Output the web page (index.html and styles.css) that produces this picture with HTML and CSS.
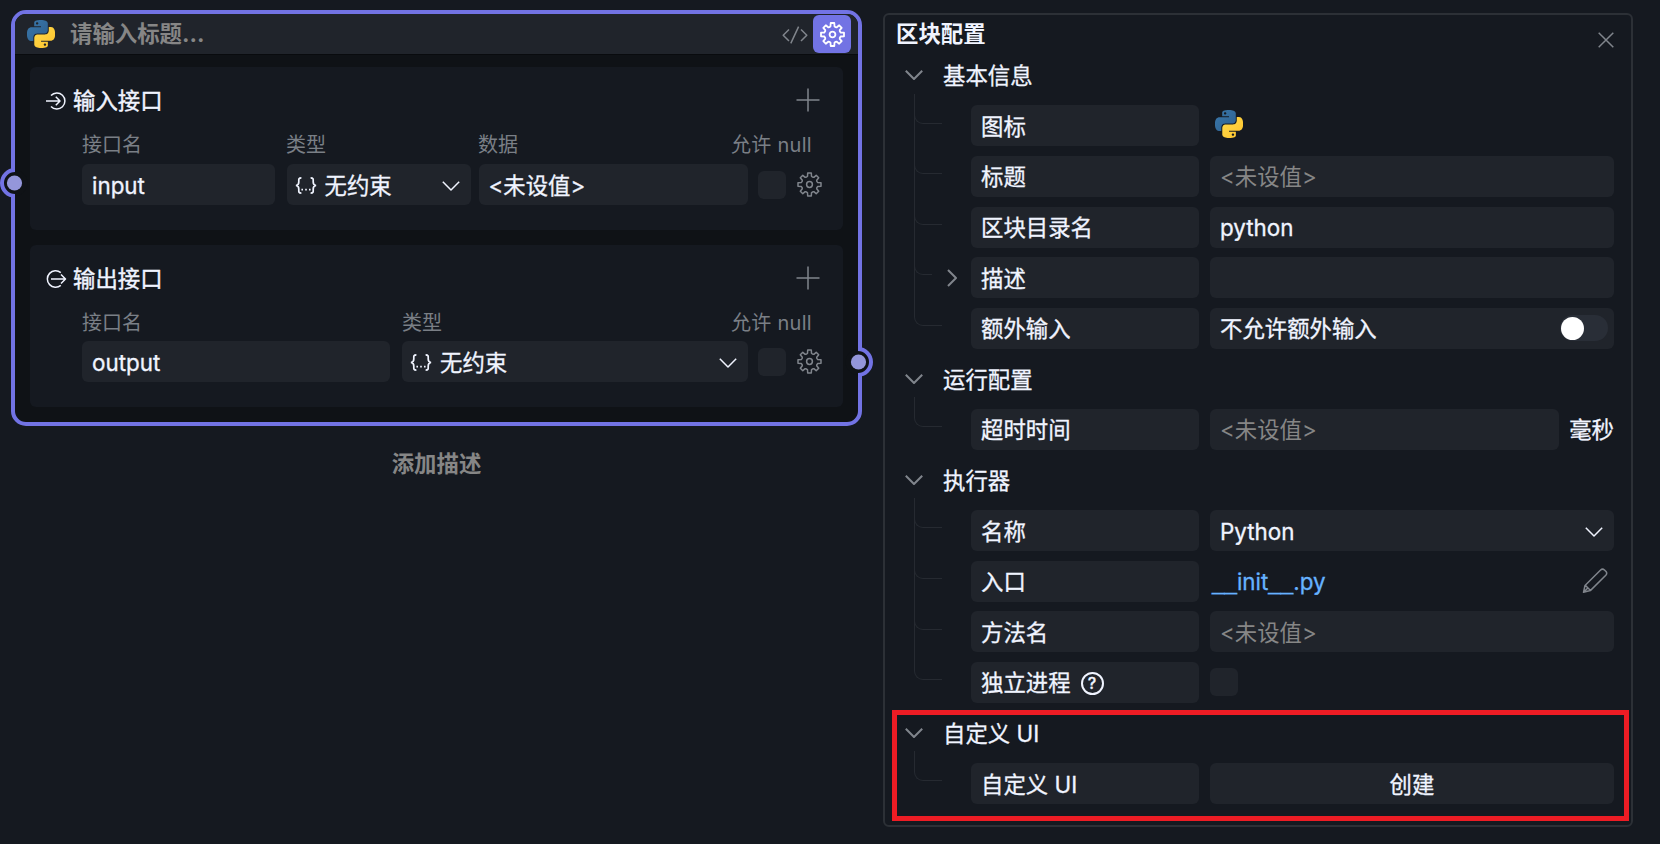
FILE: index.html
```html
<!DOCTYPE html>
<html lang="zh-CN">
<head>
<meta charset="utf-8">
<title>区块配置</title>
<link rel="stylesheet" href="styles.css">
</head>
<body>
<svg class="sprite" aria-hidden="true">
  <defs>
    <linearGradient id="py-blue" x1="0" y1="0" x2="1" y2="1"><stop offset="0" stop-color="#3a78ab"/><stop offset="1" stop-color="#2d5f8e"/></linearGradient>
    <linearGradient id="py-yellow" x1="0" y1="0" x2="1" y2="1"><stop offset="0" stop-color="#ffdb4b"/><stop offset="1" stop-color="#fdc22c"/></linearGradient>
  </defs>
  <symbol id="python" viewBox="0 0 24 24">
    <path fill="url(#py-blue)" d="M14.25.18l.9.2.73.26.59.3.45.32.34.34.25.34.16.33.1.3.04.26.02.2-.01.13V8.5l-.05.63-.13.55-.21.46-.26.38-.3.31-.33.25-.35.19-.35.14-.33.1-.3.07-.26.04-.21.02H8.77l-.69.05-.59.14-.5.22-.41.27-.33.32-.27.35-.2.36-.15.37-.1.35-.07.32-.04.27-.02.21v3.06H3.17l-.21-.03-.28-.07-.32-.12-.35-.18-.36-.26-.36-.36-.35-.46-.32-.59-.28-.73-.21-.88-.14-1.05-.05-1.23.06-1.22.16-1.04.24-.87.32-.71.36-.57.4-.44.42-.33.42-.24.4-.16.36-.1.32-.05.24-.01h.16l.06.01h8.16v-.83H6.18l-.01-2.75-.02-.37.05-.34.11-.31.17-.28.25-.26.31-.23.38-.2.44-.18.51-.15.58-.12.64-.1.71-.06.77-.04.84-.02 1.27.05zm-6.3 1.98l-.23.33-.08.41.08.41.23.34.33.22.41.09.41-.09.33-.22.23-.34.08-.41-.08-.41-.23-.33-.33-.22-.41-.09-.41.09z"/>
    <path fill="url(#py-yellow)" d="M21.1 6.11l.28.06.32.12.35.18.36.27.36.35.35.47.32.59.28.73.21.88.14 1.04.05 1.23-.06 1.23-.16 1.04-.24.86-.32.71-.36.57-.4.45-.42.33-.42.24-.4.16-.36.09-.32.05-.24.02-.16-.01h-8.22v.82h5.84l.01 2.76.02.36-.05.34-.11.31-.17.29-.25.25-.31.24-.38.2-.44.17-.51.15-.58.13-.64.09-.71.07-.77.04-.84.01-1.27-.04-1.07-.14-.9-.2-.73-.25-.59-.3-.45-.33-.34-.34-.25-.34-.16-.33-.1-.3-.04-.25-.02-.2.01-.13v-5.34l.05-.64.13-.54.21-.46.26-.38.3-.32.33-.24.35-.2.35-.14.33-.1.3-.06.26-.04.21-.02.13-.01h5.84l.69-.05.59-.14.5-.21.41-.28.33-.32.27-.35.2-.36.15-.36.1-.35.07-.32.04-.28.02-.21V6.07h2.09l.14.01zm-6.47 14.25l-.23.33-.08.41.08.41.23.33.33.23.41.08.41-.08.33-.23.23-.33.08-.41-.08-.41-.23-.33-.33-.23-.41-.08-.41.08z"/>
  </symbol>
  <symbol id="gear" viewBox="-12.5 -12.5 25 25">
    <path d="M-2-8.2L-1.8-11.5H1.8L2-8.2Q3.3-6.9 4.3-7.2L6.7-9.2 9.2-6.7 7.2-4.3Q6.9-3.3 8.2-2L11.5-1.8V1.8L8.2 2Q6.9 3.3 7.2 4.3L9.2 6.7 6.7 9.2 4.3 7.2Q3.3 6.9 2 8.2L1.8 11.5H-1.8L-2 8.2Q-3.3 6.9-4.3 7.2L-6.7 9.2-9.2 6.7-7.2 4.3Q-6.9 3.3-8.2 2L-11.5 1.8V-1.8L-8.2-2Q-6.9-3.3-7.2-4.3L-9.2-6.7-6.7-9.2-4.3-7.2Q-3.3-6.9-2-8.2Z"/>
    <circle r="2.9"/>
  </symbol>
  <symbol id="braces" viewBox="0 0 22 17">
    <path d="M6.400.9C3.200.9 3.800 2.600 3.800 5S3 8.300.9 8.500C3 8.700 3.800 9.600 3.800 12S3.200 16.100 6.400 16.100M15.600.9C18.800.9 18.200 2.600 18.200 5S19 8.300 21.100 8.500C19 8.700 18.200 9.600 18.200 12S18.800 16.100 15.600 16.100"/>
    <path d="M6.400 12.600H8M10.200 12.600H11.800M14 12.600H15.600"/>
  </symbol>
  <symbol id="down" viewBox="0 0 18 10"><path d="M.8.8L9 9 17.2.8"/></symbol>
  <symbol id="plus" viewBox="0 0 24 24"><path d="M12 .5V23.5M.5 12H23.5"/></symbol>
</svg>

<main class="canvas">
  <section class="node-column">
    <article class="node">
      <header class="node-head">
        <svg class="logo"><use href="#python"/></svg>
        <span class="node-title">请输入标题...</span>
        <svg class="line code" viewBox="0 0 26 18"><path d="M7 3.5L1.2 9.2 7 15M19 3.5L24.8 9.2 19 15M16.6.6L8.8 17.4"/></svg>
        <span class="gear-button"><svg class="line gear"><use href="#gear"/></svg></span>
      </header>
      <div class="node-body">
        <section class="ports">
          <h2 class="ports-head">
            <svg class="line io" viewBox="0 0 21 18"><path d="M0 9H14M9.8 4.8L14 9 9.8 13.2M5 3.6A8 8 0 1 1 5 14.4"/></svg>
            <span>输入接口</span>
            <svg class="line plus"><use href="#plus"/></svg>
          </h2>
          <div class="labels"><span class="name-in">接口名</span><span class="type-in">类型</span><span>数据</span><span class="nullable">允许 null</span></div>
          <div class="fields">
            <span class="field name-in">input</span>
            <span class="field type-in select"><svg class="braces"><use href="#braces"/></svg>无约束<svg class="line down"><use href="#down"/></svg></span>
            <span class="field data-in">&lt;未设值&gt;</span>
            <span class="check"></span>
            <svg class="line gear"><use href="#gear"/></svg>
          </div>
          <svg class="port port-in" viewBox="0 0 30 32"><circle class="hole" cx="14.500" cy="16" r="13"/><path class="ring" d="M15 3A13 13 0 0 0 15 29"/><circle class="dot" cx="14.500" cy="16" r="7.600"/></svg>
        </section>
        <section class="ports ports-out">
          <h2 class="ports-head">
            <svg class="line io" viewBox="0 0 21 18"><path d="M5 9H19.5M15 4.500L19.500 9 15 13.500M14.800 2.700A8.200 8.200 0 1 0 14.800 15.300"/></svg>
            <span>输出接口</span>
            <svg class="line plus"><use href="#plus"/></svg>
          </h2>
          <div class="labels"><span class="name-out">接口名</span><span>类型</span><span class="nullable">允许 null</span></div>
          <div class="fields">
            <span class="field name-out">output</span>
            <span class="field type-out select"><svg class="braces"><use href="#braces"/></svg>无约束<svg class="line down"><use href="#down"/></svg></span>
            <span class="check"></span>
            <svg class="line gear"><use href="#gear"/></svg>
          </div>
          <svg class="port port-out" viewBox="0 0 30 32"><circle class="hole" cx="14.500" cy="16" r="13"/><path class="ring" d="M14 3A13 13 0 0 1 14 29"/><circle class="dot" cx="14.500" cy="16" r="7.600"/></svg>
        </section>
      </div>
    </article>
    <p class="add-note">添加描述</p>
  </section>

  <aside class="panel">
    <header class="panel-head">
      <h1 class="panel-title">区块配置</h1>
      <svg class="line close" viewBox="0 0 16 16"><path d="M.7.7L15.300 15.300M15.300.7L.7 15.300"/></svg>
    </header>

    <section class="group">
      <h2 class="group-head"><svg class="line fold"><use href="#down"/></svg>基本信息</h2>
      <div class="row"><span class="branch"></span><span class="field key">图标</span><span class="value"><svg class="logo value-logo"><use href="#python"/></svg></span></div>
      <div class="row"><span class="branch"></span><span class="field key">标题</span><span class="field value empty">&lt;未设值&gt;</span></div>
      <div class="row"><span class="branch"></span><span class="field key">区块目录名</span><span class="field value">python</span></div>
      <div class="row"><span class="branch short"></span><svg class="line expand" viewBox="0 0 10 18"><path d="M1 1L9 9 1 17"/></svg><span class="field key">描述</span><span class="field value"></span></div>
      <div class="row"><span class="branch"></span><span class="field key">额外输入</span><span class="field value">不允许额外输入<span class="toggle"></span></span></div>
    </section>

    <section class="group">
      <h2 class="group-head"><svg class="line fold"><use href="#down"/></svg>运行配置</h2>
      <div class="row"><span class="branch"></span><span class="field key">超时时间</span><span class="field value empty">&lt;未设值&gt;</span><span class="unit">毫秒</span></div>
    </section>

    <section class="group">
      <h2 class="group-head"><svg class="line fold"><use href="#down"/></svg>执行器</h2>
      <div class="row"><span class="branch"></span><span class="field key">名称</span><span class="field value select">Python<svg class="line down"><use href="#down"/></svg></span></div>
      <div class="row"><span class="branch"></span><span class="field key">入口</span><span class="value link"><span><span class="rule">__</span>init<span class="rule">__</span>.py</span><svg class="line pencil" viewBox="0 0 26 26"><path d="M1.500 24.300L3 17.500 18.600 2Q20.500.3 22.500 2L24 3.500Q25.500 5.300 23.800 7.200L8.300 22.600ZM3.500 17.500L8.300 22.300M1.500 24.300L5.800 20"/></svg></span></div>
      <div class="row"><span class="branch"></span><span class="field key">方法名</span><span class="field value empty">&lt;未设值&gt;</span></div>
      <div class="row"><span class="branch"></span><span class="field key">独立进程<span class="help">?</span></span><span class="value"><span class="check"></span></span></div>
    </section>

    <section class="group highlighted">
      <h2 class="group-head"><svg class="line fold"><use href="#down"/></svg>自定义 UI</h2>
      <div class="row"><span class="branch"></span><span class="field key">自定义 UI</span><span class="field value create">创建</span></div>
    </section>
  </aside>
</main>
</body>
</html>
```
FILE: styles.css
```css
* { box-sizing: border-box; }

body {
  margin: 0;
  background: #151920;
  color: #f0f4ff;
  font: 400 22.4px/30px Inter, "Noto Sans CJK SC", sans-serif;
}

h1, h2, p { margin: 0; font-size: inherit; font-weight: inherit; }

.sprite { position: absolute; width: 0; height: 0; }

.canvas {
  display: flex;
  align-items: flex-start;
  gap: 21px;
  height: 844px;
  padding: 10px 0 0 11px;
  overflow: hidden;
}

.line {
  flex: none;
  fill: none;
  stroke: #80858c;
  stroke-width: 1.5;
  stroke-linejoin: round;
}

.logo { flex: none; width: 28px; height: 28px; }

/* Node card */
.node-column { flex: none; width: 851px; }

.node {
  height: 416px;
  border: 4px solid #7273e4;
  border-radius: 15px;
  background: #0f1216;
}

.node-head {
  display: flex;
  align-items: center;
  height: 41px;
  padding: 0 7px 0 12px;
  border-bottom: 1px solid #090b0e;
  border-radius: 11px 11px 0 0;
  background: #20242b;
}

.node-title { flex: 1; margin-left: 15px; color: #868686; font-weight: 700; }
.code { width: 26px; height: 18px; margin: 1px 5px 0 0; }

.gear-button {
  display: flex;
  align-items: center;
  justify-content: center;
  width: 38px;
  height: 38px;
  border-radius: 6px;
  background: #7273e4;
}

.gear { width: 25px; height: 25px; }
.gear-button .gear { stroke: #fff; stroke-width: 1.8; }

.node-body { display: flex; flex-direction: column; gap: 15px; padding: 12px 15px; }

.ports {
  position: relative;
  height: 163px;
  padding: 17px 0 0 16px;
  border-radius: 6px;
  background: #151920;
}

.ports-out { height: 162px; }

.ports-head {
  display: flex;
  align-items: center;
  height: 32px;
  padding-top: 2px;
  -webkit-text-stroke: .4px;
}

.ports-head .plus { width: 24px; height: 24px; margin: -3px 23px 0 auto; }
.io { width: 21px; height: 18px; margin: -1px 6px 0 0; stroke: #f0f4ff; }

.labels {
  display: flex;
  gap: 11px;
  height: 30px;
  margin: 14px 31px 0 36px;
  color: #7a7f86;
  font-size: 20px;
}

.ports-out .labels { margin-top: 13.500px; }
.nullable { margin-left: auto; letter-spacing: .3px; }
.fields { display: flex; align-items: center; margin: 4px 0 0 36px; }
.ports-out .fields { margin-top: 3.500px; }

.field {
  display: flex;
  flex: none;
  align-items: center;
  height: 41px;
  padding: 2px 10px 0;
  border-radius: 6px;
  background: #20242b;
  -webkit-text-stroke: .3px;
}

.name-in { width: 193px; }
.type-in { width: 184px; }
.labels .type-in { width: 181px; }
.fields .type-in { margin: 0 8px 0 11.500px; }
.data-in { width: 269px; }
.name-out { width: 308px; }
.labels .name-out { width: 309px; }
.type-out { width: 346px; margin-left: 12px; }
.fields .check { margin: 0 11px 0 10px; }
.fields .type-in, .type-out { padding-left: 8px; }

.braces {
  flex: none;
  width: 22px;
  height: 17px;
  margin: 0 8px 0 0;
  fill: none;
  stroke: #f0f4ff;
  stroke-width: 1.7;
}

.down { width: 18px; height: 10px; margin: 1px 0 0 auto; stroke: #f0f4ff; }

.check { flex: none; width: 28px; height: 28px; border-radius: 6px; background: #20242b; }

.port { position: absolute; width: 30px; height: 32px; }
.port-in { top: 100px; left: -30px; }
.port-out { top: 101px; right: -31px; }
.hole { fill: #0f1216; }
.ring { fill: none; stroke: #7273e4; stroke-width: 4; }
.dot { fill: #9496da; }

.add-note { margin-top: 23px; color: #868686; font-weight: 700; text-align: center; }

/* Configuration panel */
.panel {
  width: 750px;
  height: 814px;
  margin-top: 3px;
  padding-left: 12px;
  border: 2px solid #2c3036;
  border-radius: 6px;
}

.panel-head { display: flex; align-items: flex-start; height: 35px; }
.panel-title { margin: 4px 0 0 -1px; font-weight: 700; }
.close { width: 16px; height: 16px; margin: 16.500px 17px 0 auto; }

.group { position: relative; }

.group-head {
  display: flex;
  align-items: center;
  height: 50.6px;
  padding-top: 2px;
  -webkit-text-stroke: .3px;
}

.fold { width: 18px; height: 10px; margin: -2px 20px 0 8px; stroke-width: 2; }

.row { display: flex; position: relative; align-items: center; height: 50.6px; }

.branch {
  flex: none;
  align-self: flex-start;
  width: 28px;
  height: 30px;
  margin: -7px 29px 0 17px;
  border: solid #262a31;
  border-width: 0 0 1.500px 1.500px;
  border-bottom-left-radius: 9px;
}

.row:not(:last-child)::before {
  content: "";
  position: absolute;
  top: -7px;
  left: 17px;
  height: 51px;
  border-left: 1px solid #262a31;
}

.branch.short { width: 18px; margin-right: 15px; }
.expand { width: 10px; height: 18px; margin-right: 14px; stroke-width: 2; }
.key { width: 228px; margin-right: 11px; }
.value { display: flex; flex: 1; align-items: center; margin-right: 17px; }
.value-logo { margin: -4px 0 0 5px; }
.empty { color: #868686; -webkit-text-stroke: 0; }
.unit { margin: 2px 17px 0 -7px; -webkit-text-stroke: .3px; }
.create { justify-content: center; }
.select .down { margin-right: 1px; }
.link { padding: 2px 6px 0 2px; color: #66b2ff; -webkit-text-stroke: .3px; }
.rule { font-family: "Liberation Sans", sans-serif; }
.pencil { width: 26px; height: 26px; margin: -2px 0 0 auto; }

.toggle {
  width: 48px;
  height: 26px;
  margin: -2px -4px 0 auto;
  padding: 2px 1px;
  border-radius: 13px;
  background: #292e37;
}

.toggle::before { content: ""; display: block; width: 23px; height: 23px; border-radius: 50%; background: #fff; }

.help {
  width: 23px;
  height: 23px;
  margin-left: 10px;
  border: 2px solid #f0f4ff;
  border-radius: 50%;
  font-size: 16px;
  font-weight: 500;
  line-height: 19px;
  text-align: center;
}

.highlighted::after {
  content: "";
  position: absolute;
  inset: 2px 2px -12px -5px;
  border: 5px solid #ed1c24;
}
```
